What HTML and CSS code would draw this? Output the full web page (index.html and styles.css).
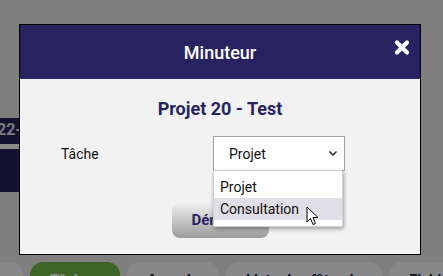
FILE: index.html
```html
<!DOCTYPE html>
<html lang="fr">
<head>
  <meta charset="UTF-8" />
  <meta name="viewport" content="width=device-width, initial-scale=1.0" />
  <title>Minuteur</title>
  <link rel="stylesheet" href="styles.css">
</head>
<body>
  <div class="page">
    <div class="date-band">
      <span class="date-text">22-06</span>
      <div class="date-line"></div>
    </div>
    <div class="tabs">
      <div class="tab tab-edge">Ac</div>
      <div class="tab tab-active">Tâches</div>
      <div class="tab">Agenda</div>
      <div class="tab tab-wide">Liste des fêtes à venir</div>
      <div class="tab">Fichiers</div>
    </div>
  </div>

  <div class="overlay">
    <div class="modal">
      <div class="modal-header">
        <h2>Minuteur</h2>
        <span class="close">
          <svg width="16" height="15" viewBox="0 0 16 15">
            <path d="M3 2.5 L13 12.5 M13 2.5 L3 12.5" stroke="#fff" stroke-width="4.2" stroke-linecap="round"/>
          </svg>
        </span>
      </div>
      <div class="modal-body">
        <h3>Projet 20 - Test</h3>
        <div class="field">
          <label>Tâche</label>
          <div class="select-wrap">
            <div class="select">
              <span>Projet</span>
              <svg width="10" height="7" viewBox="0 0 10 7">
                <path d="M1.5 1.5 L5 5 L8.5 1.5" fill="none" stroke="#222" stroke-width="1.5"/>
              </svg>
            </div>
            <ul class="options">
              <li>Projet</li>
              <li class="hover">Consultation</li>
            </ul>
            <svg class="cursor" width="14" height="20" viewBox="0 0 14 20">
              <path d="M1 1 L1 16 L4.5 12.5 L7 18.5 L9.5 17.5 L7 11.5 L12 11.5 Z" fill="#fff" stroke="#000" stroke-width="1" stroke-linejoin="round"/>
            </svg>
          </div>
        </div>
        <div class="actions">
          <button>Démarrer</button>
        </div>
      </div>
    </div>
  </div>
</body>
</html>
```

FILE: styles.css
```css
* {
  box-sizing: border-box;
  margin: 0;
  padding: 0;
}

html, body {
  height: 100%;
  overflow: hidden;
}

body {
  background: #e8e8e8;
  font-family: Roboto, "Liberation Sans", sans-serif;
}

.page {
  display: flex;
  flex-direction: column;
}

.date-band {
  margin-top: 118px;
  width: 80px;
  height: 74px;
  background: #231f58;
  padding-top: 3px;
}

.date-text {
  display: block;
  margin-left: -3px;
  color: #e4e4ee;
  font-weight: bold;
  font-size: 16px;
  line-height: 18px;
}

.date-line {
  margin-top: 5px;
  height: 5px;
  background: #fafafa;
}

.tabs {
  display: flex;
  gap: 7px;
  margin-top: 70px;
  margin-left: -40px;
}

.tab {
  flex: none;
  height: 30px;
  padding: 9px 20px 0;
  border-radius: 13px 13px 0 0;
  background: #f8f8f8;
  color: #231f58;
  font-size: 15px;
  font-weight: bold;
  width: 92px;
  white-space: nowrap;
  overflow: hidden;
}

.tab-edge {
  width: 63px;
}

.tab-active {
  width: 90px;
  background: #71b649;
  color: #fff;
}

.tab-wide {
  width: 156px;
}

.overlay {
  position: fixed;
  inset: 0;
  background: rgba(0, 0, 0, 0.45);
}

.modal {
  margin: 24px 0 0 19px;
  width: 402px;
  border: 1px solid #000;
  background: #f2f2f2;
}

.modal-header {
  position: relative;
  height: 54px;
  background: #272361;
  color: #fff;
  display: flex;
  align-items: center;
  justify-content: center;
}

.modal-header h2 {
  font-size: 18px;
  font-weight: 500;
  padding-top: 1px;
}

.close {
  position: absolute;
  right: 10px;
  top: 15px;
  display: flex;
}

.modal-body {
  padding: 19px 0 16px;
}

.modal-body h3 {
  text-align: center;
  color: #272361;
  font-size: 18px;
  font-weight: bold;
  line-height: 22px;
}

.field {
  display: flex;
  align-items: center;
  margin-top: 16px;
  padding-left: 41px;
}

.field label {
  width: 152px;
  font-size: 14px;
  color: #111;
}

.select-wrap {
  position: relative;
}

.select {
  width: 132px;
  height: 35px;
  border: 1px solid #a0a0a0;
  background: #fff;
  display: flex;
  align-items: center;
  justify-content: space-between;
  padding: 0 6px 0 15px;
  font-size: 14px;
  color: #111;
}

.options {
  position: absolute;
  left: 0;
  top: 34px;
  width: 130px;
  list-style: none;
  background: #fff;
  border: 1px solid #cfcfd6;
  border-radius: 2px;
  box-shadow: 1px 2px 4px rgba(0, 0, 0, 0.35);
  padding: 5px 0 6px;
  z-index: 2;
}

.options li {
  height: 22px;
  line-height: 22px;
  padding-left: 6px;
  font-size: 14px;
  color: #111;
}

.options li.hover {
  background: #e0dfe7;
}

.cursor {
  position: absolute;
  left: 93px;
  top: 70px;
  z-index: 3;
}

.actions {
  display: flex;
  justify-content: center;
  margin-top: 31px;
}

button {
  width: 97px;
  height: 36px;
  border: none;
  border-radius: 8px;
  background: linear-gradient(#f2f2f2, #9c9c9c);
  color: #272361;
  font-family: inherit;
  font-size: 15px;
  font-weight: bold;
  text-align: left;
  padding: 0 0 0 20px;
  white-space: nowrap;
  overflow: hidden;
}
```
